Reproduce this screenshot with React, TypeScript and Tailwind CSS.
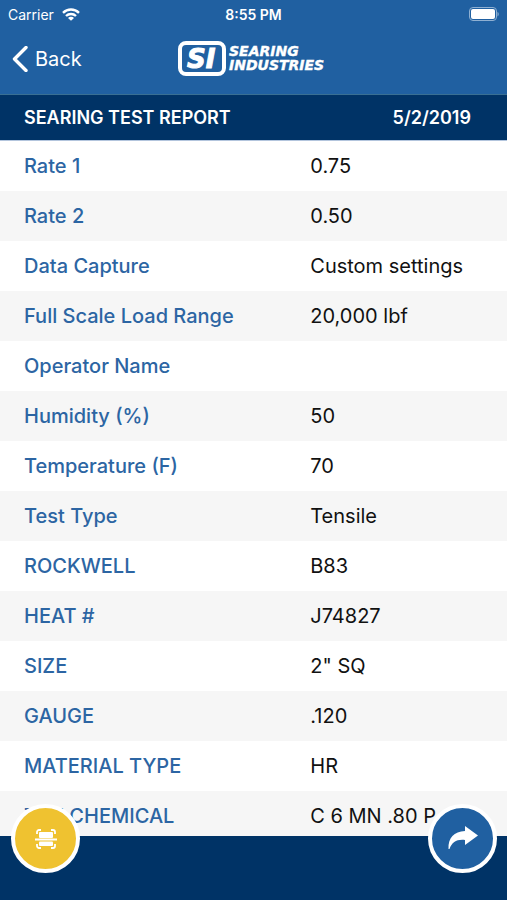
import React from 'react';

const rows = [
  { label: 'Rate 1', value: '0.75' },
  { label: 'Rate 2', value: '0.50' },
  { label: 'Data Capture', value: 'Custom settings' },
  { label: 'Full Scale Load Range', value: '20,000 lbf' },
  { label: 'Operator Name', value: '' },
  { label: 'Humidity (%)', value: '50' },
  { label: 'Temperature (F)', value: '70' },
  { label: 'Test Type', value: 'Tensile' },
  { label: 'ROCKWELL', value: 'B83' },
  { label: 'HEAT #', value: 'J74827' },
  { label: 'SIZE', value: '2" SQ' },
  { label: 'GAUGE', value: '.120' },
  { label: 'MATERIAL TYPE', value: 'HR' },
  { label: 'THE CHEMICAL', value: 'C 6 MN .80 P' },
];

function StatusBar() {
  return (
    <div className="grid grid-cols-3 items-center h-7 px-2 text-[14px]">
      <div className="flex items-center gap-2">
        <span>Carrier</span>
        <svg width="18" height="13" viewBox="0 0 18 13" fill="none" stroke="white" strokeWidth="2.4">
          <path d="M1 4.8a11.5 11.5 0 0 1 16 0" />
          <path d="M4 8a7.2 7.2 0 0 1 10 0" />
          <path d="M9 12.8 6 9.9a4.2 4.2 0 0 1 6 0Z" fill="white" stroke="none" />
        </svg>
      </div>
      <span className="text-center font-semibold whitespace-nowrap">8:55 PM</span>
      <svg className="justify-self-end" width="30" height="14" viewBox="0 0 30 14">
        <rect x="0.5" y="0.5" width="27" height="13" rx="3.5" fill="none" stroke="#8fb0d2" />
        <rect x="2" y="2" width="24" height="10" rx="2" fill="white" />
        <path d="M28.5 5v4.4c1.6-.6 1.6-3.8 0-4.4Z" fill="#8fb0d2" />
      </svg>
    </div>
  );
}

function Logo() {
  return (
    <svg width="152" height="36" viewBox="0 0 152 36" role="img" aria-label="Searing Industries">
      <rect x="2" y="2" width="44" height="31" rx="6" fill="none" stroke="white" strokeWidth="4" />
      <g
        fill="white"
        stroke="white"
        fontFamily="'DejaVu Sans', sans-serif"
        fontStyle="italic"
        fontWeight="700"
      >
        <text x="9" y="27" fontSize="26" strokeWidth="1">SI</text>
        <text x="51" y="15" fontSize="14" strokeWidth="0.4">SEARING</text>
        <text x="51" y="29" fontSize="14" strokeWidth="0.4">INDUSTRIES</text>
      </g>
    </svg>
  );
}

export default function App() {
  return (
    <div className="relative flex flex-col h-screen overflow-hidden bg-white font-['Inter',sans-serif]">
      <header className="shrink-0 bg-[#2060a1] text-white">
        <StatusBar />
        <div className="grid grid-cols-[1fr_auto_1fr] items-center h-[66px] px-3 pb-1">
          <button type="button" className="flex items-center gap-[7px] justify-self-start text-xl">
            <svg width="16" height="26" viewBox="0 0 16 26" fill="none" stroke="white" strokeWidth="3.4">
              <path d="M14 1.5 2.5 13 14 24.5" strokeLinecap="round" strokeLinejoin="round" />
            </svg>
            Back
          </button>
          <Logo />
        </div>
      </header>

      <div className="flex shrink-0 items-center justify-between h-[47px] pl-6 pr-9 bg-[#003366] border-t border-t-[#396f93] border-b border-b-[#b3c5dd] text-white text-lg font-semibold">
        <h1>SEARING TEST REPORT</h1>
        <span>5/2/2019</span>
      </div>

      <main className="flex-1 min-h-0 overflow-hidden">
        <table className="w-full table-fixed text-left text-xl">
          <tbody>
            {rows.map((row) => (
              <tr key={row.label} className="h-[50px] odd:bg-white even:bg-[#f6f6f6]">
                <th scope="row" className="w-[61%] pl-6 font-medium text-[#2c65a3] whitespace-nowrap">
                  {row.label}
                </th>
                <td className="pl-px text-[#111111] whitespace-nowrap">{row.value}</td>
              </tr>
            ))}
          </tbody>
        </table>
      </main>

      <footer className="flex shrink-0 justify-between h-16 pl-[11px] pr-[10px] bg-[#003366]">
        <button
          type="button"
          aria-label="Scan"
          className="relative flex items-center justify-center size-[69px] -mt-8 rounded-full border-4 border-white bg-[#efc230]"
        >
          <svg width="22" height="22" viewBox="0 0 22 22" fill="white">
            <path
              d="M2 6V4a2 2 0 0 1 2-2h2M16 2h2a2 2 0 0 1 2 2v2M20 16v2a2 2 0 0 1-2 2h-2M6 20H4a2 2 0 0 1-2-2v-2"
              fill="none"
              stroke="white"
              strokeWidth="1.8"
            />
            <rect x="4" y="4" width="14" height="6" rx="1" />
            <rect x="0" y="10.5" width="22" height="2" />
            <rect x="4" y="13.5" width="14" height="4.5" rx="1" />
          </svg>
        </button>
        <button
          type="button"
          aria-label="Share"
          className="relative flex items-center justify-center size-[69px] -mt-8 pb-1 rounded-full border-4 border-white bg-[#2060a1]"
        >
          <svg width="30" height="24" viewBox="0 0 30 24" fill="white">
            <path d="M17 1 30 10.5 17 20v-5C9 14 4 17 1.5 24H.5C0 13 6 6.500 17 6Z" />
          </svg>
        </button>
      </footer>
    </div>
  );
}
